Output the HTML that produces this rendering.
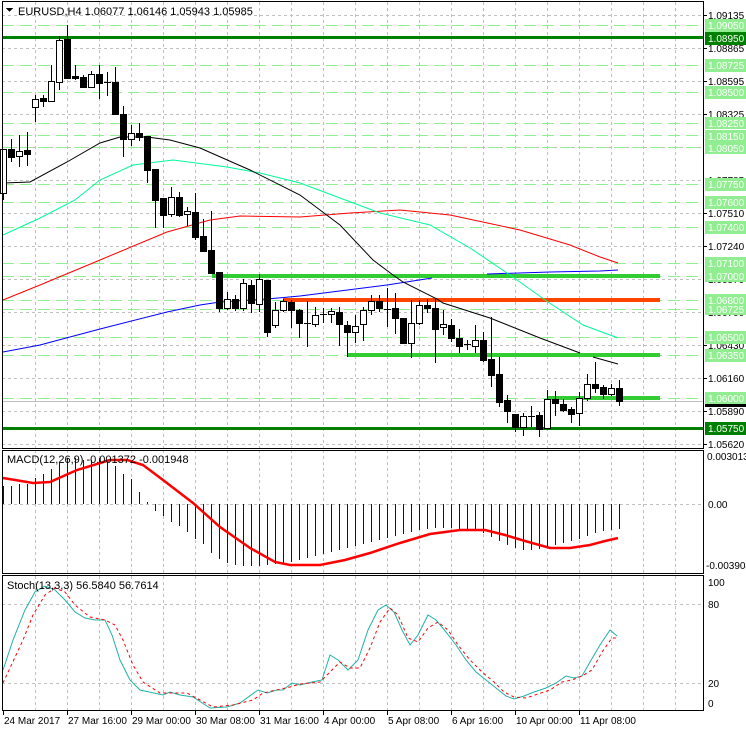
<!DOCTYPE html>
<html><head><meta charset="utf-8"><style>
html,body{margin:0;padding:0;background:#fff;width:746px;height:731px;overflow:hidden}
svg{display:block;font-family:"Liberation Sans",sans-serif;font-size:11px}
.ax{font-size:10px}
</style></head><body>
<svg width="746" height="731" viewBox="0 0 746 731" xmlns="http://www.w3.org/2000/svg" shape-rendering="crispEdges">
<rect width="746" height="731" fill="#fff"/>
<g stroke="#c0c0c0" stroke-dasharray="3,3" stroke-width="1">
<path d="M35.5 2V448M67.5 2V448M99.5 2V448M131.5 2V448M163.5 2V448M195.5 2V448M227.5 2V448M259.5 2V448M291.5 2V448M323.5 2V448M355.5 2V448M387.5 2V448M419.5 2V448M451.5 2V448M483.5 2V448M515.5 2V448M547.5 2V448M579.5 2V448M611.5 2V448M643.5 2V448M675.5 2V448"/>
<path d="M35.5 450V573M67.5 450V573M99.5 450V573M131.5 450V573M163.5 450V573M195.5 450V573M227.5 450V573M259.5 450V573M291.5 450V573M323.5 450V573M355.5 450V573M387.5 450V573M419.5 450V573M451.5 450V573M483.5 450V573M515.5 450V573M547.5 450V573M579.5 450V573M611.5 450V573M643.5 450V573M675.5 450V573"/>
<path d="M35.5 576V710M67.5 576V710M99.5 576V710M131.5 576V710M163.5 576V710M195.5 576V710M227.5 576V710M259.5 576V710M291.5 576V710M323.5 576V710M355.5 576V710M387.5 576V710M419.5 576V710M451.5 576V710M483.5 576V710M515.5 576V710M547.5 576V710M579.5 576V710M611.5 576V710M643.5 576V710M675.5 576V710"/>
<path d="M2 15.5H703M2 48.5H703M2 81.5H703M2 114.5H703M2 147.5H703M2 180.5H703M2 213.5H703M2 246.5H703M2 279.5H703M2 312.5H703M2 345.5H703M2 378.5H703M2 411.5H703M2 444.5H703"/>
<path d="M2 504.5H703M2 604.5H703M2 683.5H703"/>
</g>
<g stroke="#90ee90" stroke-width="1" stroke-dasharray="12,6">
<path d="M2 25.5H703M2 65.5H703M2 92.5H703M2 123.5H703M2 135.5H703M2 147.5H703M2 184.5H703M2 202.5H703M2 227.5H703M2 263.5H703M2 276.5H703M2 300.5H703M2 309.5H703M2 337.5H703M2 355.5H703M2 398.5H703"/>
</g>
<path d="M2 401.5H703" stroke="#c0c0c0"/>
<rect x="2" y="36" width="701" height="3" fill="#008000"/>
<rect x="2" y="427" width="701" height="3" fill="#008000"/>
<rect x="212" y="274" width="448" height="4" fill="#32cd32"/>
<rect x="283" y="298" width="377" height="4" fill="#ff4500"/>
<rect x="347" y="353" width="313" height="4" fill="#32cd32"/>
<rect x="547" y="396" width="113" height="4" fill="#32cd32"/>
<g fill="none" stroke-width="1" shape-rendering="auto">
<polyline stroke="#0000ff" points="3,352 40,345 100,329 167,312 200,305 220,302 267,299 300,296 387,285 432,278"/>
<polyline stroke="#0000ff" points="487,274 550,272 600,271 618,270"/>
<polyline stroke="#ff0000" points="3,300 40,285 100,260 167,232 210,220 240,216 300,217 350,213 400,210 450,215 520,230 570,245 600,257 618,263"/>
<polyline stroke="#00fa9a" points="3,235 40,218 75,200 100,180 133,165 173,160 227,167 260,173 300,183 340,198 380,213 430,225 470,248 510,275 548,302 583,325 618,338"/>
<polyline stroke="#000000" points="3,183 30,182 67,162 100,143 120,137 147,137 170,140 200,148 250,170 300,195 340,225 373,260 393,275 403,282 437,299 443,303 490,318 540,338 580,353"/>
<polyline stroke="#000000" points="593,357 618,364"/>
</g>
<g stroke="#000" stroke-width="1">
<path d="M3.5 149V200M11.5 139V162M19.5 135V167M27.5 132V166M35.5 95V122M43.5 95V107M51.5 65V102M59.5 36V90M67.5 25V79M75.5 65V80M83.5 75V87M91.5 71V88M99.5 65V99M107.5 72V96M115.5 67V115M123.5 106V157M131.5 125V146M139.5 123V141M147.5 136V183M155.5 169V228M163.5 198V228M171.5 187V217M179.5 192V217M187.5 207V226M195.5 193V240M203.5 219V252M211.5 211V273M219.5 272V312M227.5 292V310M235.5 295V311M243.5 279V311M251.5 280V313M259.5 274V312M267.5 280V337M275.5 302V328M283.5 299V312M291.5 300V328M299.5 309V338M307.5 301V347M315.5 307V327M323.5 308V323M331.5 308V323M339.5 307V346M347.5 321V357M355.5 315V343M363.5 307V341M371.5 295V315M379.5 295V312M387.5 288V327M395.5 293V334M403.5 318V344M411.5 300V358M419.5 300V325M427.5 299V313M435.5 299V363M443.5 310V335M451.5 319V342M459.5 329V353M467.5 340V350M475.5 325V353M483.5 332V362M491.5 317V387M499.5 357V407M507.5 395V423M515.5 414V432M523.5 413V436M531.5 406V427M539.5 412V437M547.5 390V429M555.5 391V416M563.5 399V412M571.5 407V423M579.5 392V426M587.5 374V401M595.5 362V393M603.5 385V399M611.5 384V396M619.5 380V406"/>
<path d="M104 82.5H111M320 314.5H327M304 323.5H311M384 309.5H391M464 344.5H471M528 416.5H535"/>
</g>
<g stroke="#000" stroke-width="1">
<rect x="0.5" y="149.5" width="6" height="44" fill="#fff"/>
<rect x="8.5" y="149.5" width="6" height="8" fill="#000"/>
<rect x="16.5" y="151.5" width="6" height="5" fill="#fff"/>
<rect x="24.5" y="150.5" width="6" height="4" fill="#000"/>
<rect x="32.5" y="99.5" width="6" height="8" fill="#fff"/>
<rect x="40.5" y="98.5" width="6" height="3" fill="#000"/>
<rect x="48.5" y="81.5" width="6" height="20" fill="#fff"/>
<rect x="56.5" y="40.5" width="6" height="42" fill="#fff"/>
<rect x="64.5" y="39.5" width="6" height="39" fill="#000"/>
<rect x="72.5" y="76.5" width="6" height="2" fill="#000"/>
<rect x="80.5" y="77.5" width="6" height="10" fill="#000"/>
<rect x="88.5" y="74.5" width="6" height="13" fill="#fff"/>
<rect x="96.5" y="74.5" width="6" height="9" fill="#000"/>
<rect x="112.5" y="82.5" width="6" height="32" fill="#000"/>
<rect x="120.5" y="114.5" width="6" height="25" fill="#000"/>
<rect x="128.5" y="133.5" width="6" height="6" fill="#fff"/>
<rect x="136.5" y="133.5" width="6" height="4" fill="#000"/>
<rect x="144.5" y="136.5" width="6" height="34" fill="#000"/>
<rect x="152.5" y="169.5" width="6" height="31" fill="#000"/>
<rect x="160.5" y="198.5" width="6" height="17" fill="#000"/>
<rect x="168.5" y="197.5" width="6" height="17" fill="#fff"/>
<rect x="176.5" y="197.5" width="6" height="18" fill="#000"/>
<rect x="184.5" y="211.5" width="6" height="3" fill="#fff"/>
<rect x="192.5" y="212.5" width="6" height="25" fill="#000"/>
<rect x="200.5" y="236.5" width="6" height="15" fill="#000"/>
<rect x="208.5" y="250.5" width="6" height="23" fill="#000"/>
<rect x="216.5" y="272.5" width="6" height="36" fill="#000"/>
<rect x="224.5" y="299.5" width="6" height="9" fill="#fff"/>
<rect x="232.5" y="299.5" width="6" height="9" fill="#000"/>
<rect x="240.5" y="283.5" width="6" height="25" fill="#fff"/>
<rect x="248.5" y="285.5" width="6" height="18" fill="#000"/>
<rect x="256.5" y="279.5" width="6" height="25" fill="#fff"/>
<rect x="264.5" y="280.5" width="6" height="52" fill="#000"/>
<rect x="272.5" y="310.5" width="6" height="15" fill="#fff"/>
<rect x="280.5" y="301.5" width="6" height="9" fill="#fff"/>
<rect x="288.5" y="302.5" width="6" height="8" fill="#000"/>
<rect x="296.5" y="310.5" width="6" height="13" fill="#000"/>
<rect x="312.5" y="315.5" width="6" height="9" fill="#fff"/>
<rect x="328.5" y="311.5" width="6" height="3" fill="#fff"/>
<rect x="336.5" y="312.5" width="6" height="12" fill="#000"/>
<rect x="344.5" y="325.5" width="6" height="7" fill="#000"/>
<rect x="352.5" y="326.5" width="6" height="6" fill="#fff"/>
<rect x="360.5" y="310.5" width="6" height="14" fill="#fff"/>
<rect x="368.5" y="301.5" width="6" height="9" fill="#fff"/>
<rect x="376.5" y="301.5" width="6" height="7" fill="#000"/>
<rect x="392.5" y="308.5" width="6" height="10" fill="#000"/>
<rect x="400.5" y="318.5" width="6" height="25" fill="#000"/>
<rect x="408.5" y="323.5" width="6" height="20" fill="#fff"/>
<rect x="416.5" y="305.5" width="6" height="18" fill="#fff"/>
<rect x="424.5" y="305.5" width="6" height="3" fill="#000"/>
<rect x="432.5" y="308.5" width="6" height="21" fill="#000"/>
<rect x="440.5" y="324.5" width="6" height="3" fill="#fff"/>
<rect x="448.5" y="325.5" width="6" height="13" fill="#000"/>
<rect x="456.5" y="338.5" width="6" height="8" fill="#000"/>
<rect x="472.5" y="340.5" width="6" height="6" fill="#fff"/>
<rect x="480.5" y="340.5" width="6" height="20" fill="#000"/>
<rect x="488.5" y="359.5" width="6" height="16" fill="#000"/>
<rect x="496.5" y="374.5" width="6" height="28" fill="#000"/>
<rect x="504.5" y="400.5" width="6" height="11" fill="#000"/>
<rect x="512.5" y="414.5" width="6" height="13" fill="#000"/>
<rect x="520.5" y="416.5" width="6" height="11" fill="#fff"/>
<rect x="536.5" y="415.5" width="6" height="14" fill="#000"/>
<rect x="544.5" y="399.5" width="6" height="29" fill="#fff"/>
<rect x="552.5" y="399.5" width="6" height="4" fill="#000"/>
<rect x="560.5" y="404.5" width="6" height="6" fill="#000"/>
<rect x="568.5" y="409.5" width="6" height="5" fill="#000"/>
<rect x="576.5" y="398.5" width="6" height="15" fill="#fff"/>
<rect x="584.5" y="384.5" width="6" height="14" fill="#fff"/>
<rect x="592.5" y="384.5" width="6" height="4" fill="#000"/>
<rect x="600.5" y="387.5" width="6" height="7" fill="#000"/>
<rect x="608.5" y="388.5" width="6" height="6" fill="#fff"/>
<rect x="616.5" y="388.5" width="6" height="13" fill="#000"/>
</g>
<g stroke="#0000cd" stroke-width="1">
<path d="M3.5 504V486M11.5 504V486M19.5 504V484M27.5 504V484M35.5 504V478M43.5 504V474M51.5 504V469M59.5 504V462M67.5 504V458M75.5 504V458M83.5 504V460M91.5 504V460M99.5 504V458M107.5 504V460M115.5 504V466M123.5 504V474M131.5 504V479M139.5 504V492M147.5 504V502M155.5 504V511M163.5 504V516M171.5 504V522M179.5 504V526M187.5 504V532M195.5 504V539M203.5 504V544M211.5 504V553M219.5 504V559M227.5 504V563M235.5 504V565M243.5 504V566M251.5 504V566M259.5 504V566M267.5 504V565M275.5 504V564M283.5 504V563M291.5 504V562M299.5 504V560M307.5 504V558M315.5 504V556M323.5 504V554M331.5 504V552M339.5 504V550M347.5 504V548M355.5 504V546M363.5 504V544M371.5 504V542M379.5 504V540M387.5 504V538M395.5 504V536M403.5 504V534M411.5 504V532M419.5 504V530M427.5 504V529M435.5 504V528M443.5 504V528M451.5 504V528M459.5 504V529M467.5 504V530M475.5 504V531M483.5 504V533M491.5 504V537M499.5 504V541M507.5 504V545M515.5 504V548M523.5 504V550M531.5 504V550M539.5 504V549M547.5 504V547M555.5 504V545M563.5 504V543M571.5 504V541M579.5 504V539M587.5 504V536M595.5 504V533M603.5 504V531M611.5 504V530M619.5 504V529"/>
</g>
<polyline fill="none" stroke="#ff0000" stroke-width="2.5" shape-rendering="auto" points="3,478 33,483 50,482 77,470 110,460 127,460 143,465 163,480 193,503 220,527 250,548 275,562 290,565 320,565 345,560 370,553 400,543 430,534 460,530 485,530 505,535 525,541 550,548 570,548 590,545 605,541 618,538"/>
<polyline fill="none" stroke="#20b2aa" stroke-width="1" shape-rendering="auto" points="3,670 13,640 25,610 35,592 45,586 55,590 65,600 75,612 85,618 95,620 105,620 112,635 120,660 130,680 140,690 163,695 170,692 180,695 193,697 210,708 227,707 240,703 258,690 267,693 277,690 283,690 292,683 300,685 312,682 322,680 330,655 338,660 348,670 358,660 368,630 378,610 386,605 394,612 402,630 410,645 418,635 428,615 436,620 446,632 456,645 466,660 476,672 486,680 496,688 506,696 514,699 524,696 534,692 546,688 556,683 566,676 574,678 582,676 590,662 600,645 610,630 617,636"/>
<polyline fill="none" stroke="#ff0000" stroke-width="1" stroke-dasharray="3,3" shape-rendering="auto" points="3,683 23,640 33,615 45,595 55,588 65,592 75,605 90,617 105,620 115,625 123,640 133,665 143,682 160,693 187,693 200,700 213,707 233,705 253,700 263,693 290,687 300,684 320,682 330,672 340,662 350,668 360,668 370,648 380,622 390,608 398,615 408,638 418,642 428,628 438,622 448,630 458,645 470,660 482,672 494,682 504,692 514,697 526,698 538,694 550,690 562,682 572,680 582,676 592,670 602,652 612,638 618,638"/>
<g fill="none" stroke="#000" stroke-width="1">
<rect x="2.5" y="1.5" width="701" height="447"/>
<rect x="2.5" y="450.5" width="701" height="123"/>
<rect x="2.5" y="575.5" width="701" height="135"/>
</g>
<g stroke="#000"><path d="M3.5 711V715M67.5 711V715M131.5 711V715M195.5 711V715M259.5 711V715M323.5 711V715M387.5 711V715M451.5 711V715M515.5 711V715M579.5 711V715"/></g>
<g fill="#000" class="ax">
<text x="4" y="724">24 Mar 2017</text><text x="68" y="724">27 Mar 16:00</text><text x="132" y="724">29 Mar 00:00</text><text x="196" y="724">30 Mar 08:00</text><text x="260" y="724">31 Mar 16:00</text><text x="324" y="724">4 Apr 00:00</text><text x="388" y="724">5 Apr 08:00</text><text x="452" y="724">6 Apr 16:00</text><text x="516" y="724">10 Apr 00:00</text><text x="580" y="724">11 Apr 08:00</text>
</g>
<g stroke="#000"><path d="M703 15.5H707M703 48.5H707M703 81.5H707M703 114.5H707M703 213.5H707M703 246.5H707M703 345.5H707M703 378.5H707M703 411.5H707M703 444.5H707"/></g>
<g fill="#000" class="ax">
<text x="708" y="19">1.09135</text><text x="708" y="52">1.08865</text><text x="708" y="85">1.08595</text><text x="708" y="118">1.08325</text><text x="708" y="184">1.07785</text><text x="708" y="217">1.07510</text><text x="708" y="250">1.07240</text><text x="708" y="283">1.06970</text><text x="708" y="316">1.06700</text><text x="708" y="349">1.06430</text><text x="708" y="382">1.06160</text><text x="708" y="415">1.05890</text><text x="708" y="448">1.05620</text>
<text x="707" y="460">0.003013</text><text x="708" y="508">0.00</text><text x="706" y="569">-0.003904</text>
<text x="708" y="586">100</text><text x="708" y="608">80</text><text x="708" y="687">20</text><text x="708" y="707">0</text>
</g>
<rect x="705" y="402" width="41" height="5" fill="#000"/>
<g fill="#90ee90">
<rect x="705" y="19" width="41" height="13"/><rect x="705" y="59" width="41" height="13"/><rect x="705" y="86" width="41" height="13"/><rect x="705" y="117" width="41" height="12"/><rect x="705" y="130" width="41" height="12"/><rect x="705" y="142" width="41" height="12"/><rect x="705" y="178" width="41" height="13"/><rect x="705" y="196" width="41" height="13"/><rect x="705" y="221" width="41" height="13"/><rect x="705" y="257" width="41" height="13"/><rect x="705" y="270" width="41" height="12"/><rect x="705" y="294" width="41" height="12"/><rect x="705" y="303" width="41" height="12"/><rect x="705" y="331" width="41" height="13"/><rect x="705" y="349" width="41" height="13"/><rect x="705" y="392" width="41" height="12"/>
</g>
<g fill="#008000"><rect x="705" y="32" width="41" height="13"/><rect x="705" y="422" width="41" height="13"/></g>
<g fill="#fff" class="ax">
<text x="708" y="29">1.09050</text><text x="708" y="69">1.08725</text><text x="708" y="96">1.08500</text><text x="708" y="127">1.08250</text><text x="708" y="140">1.08150</text><text x="708" y="152">1.08050</text><text x="708" y="188">1.07750</text><text x="708" y="206">1.07600</text><text x="708" y="231">1.07400</text><text x="708" y="267">1.07100</text><text x="708" y="280">1.07000</text><text x="708" y="304">1.06800</text><text x="708" y="313">1.06725</text><text x="708" y="341">1.06500</text><text x="708" y="359">1.06350</text><text x="708" y="402">1.06000</text>
<text x="708" y="42">1.08950</text><text x="708" y="432">1.05750</text>
</g>
<path d="M6 8H13L9.5 12Z" fill="#000"/>
<text x="18" y="15" fill="#000">EURUSD,H4  1.06077 1.06146 1.05943 1.05985</text>
<text x="7" y="463" fill="#000">MACD(12,26,9) -0.001372 -0.001948</text>
<text x="7" y="589" fill="#000">Stoch(13,3,3) 56.5840 56.7614</text>
</svg>
</body></html>
